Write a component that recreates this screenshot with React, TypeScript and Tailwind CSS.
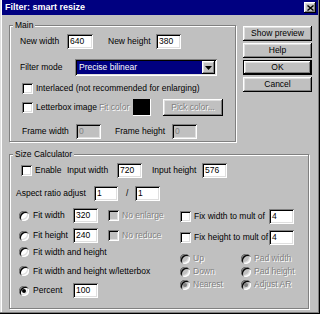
import React from "react";

const sunken =
  "shadow-[inset_1px_1px_0_#808080,inset_-1px_-1px_0_#fff,inset_2px_2px_0_#000,inset_-2px_-2px_0_#dfdfdf]";
const raised =
  "shadow-[inset_-1px_-1px_0_#000,inset_1px_1px_0_#fff,inset_-2px_-2px_0_#808080,inset_2px_2px_0_#dfdfdf]";
const dis = "text-[#808080] [text-shadow:1px_1px_0_#fff]";

function Field({ value, w, disabled }: { value: string; w: string; disabled?: boolean }) {
  return (
    <div
      className={`h-[15px] ${w} ${disabled ? "bg-[#c0c0c0] text-[#808080]" : "bg-white"} ${sunken} flex items-center pl-[3px] shrink-0`}
    >
      {value}
    </div>
  );
}

function Check({ disabled }: { disabled?: boolean }) {
  return <div className={`w-[11px] h-[11px] shrink-0 ${disabled ? "bg-[#c0c0c0]" : "bg-white"} ${sunken}`} />;
}

function Radio({ checked, disabled }: { checked?: boolean; disabled?: boolean }) {
  return (
    <div
      className={`w-[10px] h-[10px] shrink-0 rounded-full ${disabled ? "bg-[#c0c0c0]" : "bg-white"} shadow-[inset_1px_1px_0_#808080,inset_2px_2px_0_#000,inset_-1px_-1px_0_#fff,inset_-2px_-2px_0_#dfdfdf] flex items-center justify-center`}
    >
      {checked && <div className={`w-[4px] h-[4px] rounded-full ${disabled ? "bg-[#808080]" : "bg-black"}`} />}
    </div>
  );
}

function Btn({ label, def }: { label: string; def?: boolean }) {
  return (
    <div className={`h-[15px] w-[69px] ${def ? "border border-black" : ""}`}>
      <div className={`h-full w-full ${raised} flex items-center justify-center`}>{label}</div>
    </div>
  );
}

function Group({ label, className, children }: { label: string; className: string; children: React.ReactNode }) {
  return (
    <div className={`border border-[#808080] shadow-[1px_1px_0_#fff,inset_1px_1px_0_#fff] ${className}`}>
      <div className="-mt-[6px] ml-[3px] px-[2px] bg-[#c0c0c0] w-fit h-[10px] flex items-center">{label}</div>
      {children}
    </div>
  );
}

export default function App() {
  return (
    <div className="w-[320px] h-[314px] bg-[#c0c0c0] font-['Liberation_Sans',Arial,sans-serif] text-[8.5px] text-black leading-none px-[2px] pb-[2px] shadow-[inset_-1px_-1px_0_#000,inset_-2px_-2px_0_#808080,inset_1px_0_0_#dfdfdf,inset_2px_0_0_#fff] flex flex-col overflow-hidden">
      {/* Title bar */}
      <div className="h-[15px] bg-[#000080] flex items-center justify-between pl-[3px] pr-[2px] shrink-0">
        <span className="text-white font-bold text-[9px]">Filter: smart resize</span>
        <div className={`w-[12px] h-[11px] bg-[#c0c0c0] ${raised} flex items-center justify-center`}>
          <svg width="7" height="6" viewBox="0 0 7 6">
            <path d="M0.5 0.5 L6.5 5.5 M6.5 0.5 L0.5 5.5" stroke="#000" strokeWidth="1.4" />
          </svg>
        </div>
      </div>

      {/* Top section */}
      <div className="flex items-start shrink-0">
        <Group label="Main" className="ml-[7px] mt-[10px] w-[227px] pb-[2px]">
          <div className="mt-[4px] h-[15px] flex items-center pl-[10px]">
            <span className="w-[47px]">New width</span>
            <Field value="640" w="w-[26px]" />
            <span className="ml-[15px] w-[48px]">New height</span>
            <Field value="380" w="w-[25px]" />
          </div>
          <div className="mt-[10px] h-[17px] flex items-center pl-[10px]">
            <span className="w-[55px]">Filter mode</span>
            <div className={`w-[142px] h-[17px] bg-white ${sunken} flex items-center p-[2px]`}>
              <div className="flex-1 h-full bg-[#000080] text-white flex items-center pl-[2px]">Precise bilinear</div>
              <div className={`w-[13px] h-full bg-[#c0c0c0] ${raised} flex items-center justify-center`}>
                <svg width="7" height="4" viewBox="0 0 7 4">
                  <path d="M0 0 H7 L3.5 4 Z" fill="#000" />
                </svg>
              </div>
            </div>
          </div>
          <div className="mt-[5px] h-[14px] flex items-center pl-[12px]">
            <Check />
            <span className="ml-[3px]">Interlaced (not recommended for enlarging)</span>
          </div>
          <div className="mt-[4px] h-[17px] flex items-center pl-[12px]">
            <Check />
            <span className="ml-[3px] w-[63px]">Letterbox image</span>
            <span className={`w-[34px] ${dis}`}>Fit color</span>
            <div className={`w-[18px] h-[17px] bg-black shadow-[inset_-1px_-1px_0_#fff]`} />
            <div className={`ml-[12px] w-[60px] h-[17px] ${raised} flex items-center justify-center ${dis}`}>Pick color...</div>
          </div>
          <div className="mt-[8px] h-[15px] flex items-center pl-[12px]">
            <span className="w-[54px]">Frame width</span>
            <Field value="0" w="w-[25px]" disabled />
            <span className="ml-[14px] w-[57px]">Frame height</span>
            <Field value="0" w="w-[25px]" disabled />
          </div>
        </Group>

        <div className="ml-[7px] mt-[11px] w-[69px] flex flex-col gap-[2px]">
          <Btn label="Show preview" />
          <Btn label="Help" />
          <Btn label="OK" def />
          <Btn label="Cancel" />
        </div>
      </div>

      {/* Size calculator */}
      <Group label="Size Calculator" className="ml-[7px] mt-[12px] w-[300px] pb-[10px] shrink-0">
        <div className="mt-[4px] h-[15px] flex items-center pl-[11px]">
          <Check />
          <span className="ml-[3px] w-[32px]">Enable</span>
          <span className="w-[50px]">Input width</span>
          <Field value="720" w="w-[25px]" />
          <span className="ml-[10px] w-[50px]">Input height</span>
          <Field value="576" w="w-[25px]" />
        </div>
        <div className="mt-[8px] h-[15px] flex items-center pl-[6px]">
          <span className="w-[78px]">Aspect ratio adjust</span>
          <Field value="1" w="w-[24px]" />
          <span className="ml-[8px] w-[9px]">/</span>
          <Field value="1" w="w-[25px]" />
        </div>
        <div className="flex">
          <div className="w-[170px] pl-[9px] flex flex-col">
            <div className="mt-[7px] h-[15px] flex items-center">
              <Radio />
              <span className="ml-[4px] w-[40px]">Fit width</span>
              <Field value="320" w="w-[25px]" />
              <div className="ml-[10px]"><Check disabled /></div>
              <span className={`ml-[3px] ${dis}`}>No enlarge</span>
            </div>
            <div className="mt-[5px] h-[15px] flex items-center">
              <Radio />
              <span className="ml-[4px] w-[40px]">Fit height</span>
              <Field value="240" w="w-[25px]" />
              <div className="ml-[10px]"><Check disabled /></div>
              <span className={`ml-[3px] ${dis}`}>No reduce</span>
            </div>
            <div className="mt-[2px] h-[14px] flex items-center">
              <Radio />
              <span className="ml-[4px]">Fit width and height</span>
            </div>
            <div className="mt-[5px] h-[14px] flex items-center">
              <Radio />
              <span className="ml-[4px]">Fit width and height w/letterbox</span>
            </div>
            <div className="mt-[5px] h-[15px] flex items-center">
              <Radio checked />
              <span className="ml-[4px] w-[40px]">Percent</span>
              <Field value="100" w="w-[25px]" />
            </div>
          </div>
          <div className="flex flex-col">
            <div className="mt-[8px] h-[15px] flex items-center">
              <Check />
              <span className="ml-[3px] w-[75px]">Fix width to mult of</span>
              <Field value="4" w="w-[25px]" />
            </div>
            <div className="mt-[6px] h-[15px] flex items-center">
              <Check />
              <span className="ml-[3px] w-[75px]">Fix height to mult of</span>
              <Field value="4" w="w-[25px]" />
            </div>
            <div className="mt-[7px] grid grid-cols-[61px_auto]">
              {[
                ["Up", false, "Pad width", false],
                ["Down", false, "Pad height", false],
                ["Nearest", true, "Adjust AR", true],
              ].map(([a, ac, b, bc]) => (
                <React.Fragment key={a as string}>
                  <div className="h-[13px] flex items-center">
                    <Radio disabled checked={ac as boolean} />
                    <span className={`ml-[3px] ${dis}`}>{a as string}</span>
                  </div>
                  <div className="h-[13px] flex items-center">
                    <Radio disabled checked={bc as boolean} />
                    <span className={`ml-[3px] ${dis}`}>{b as string}</span>
                  </div>
                </React.Fragment>
              ))}
            </div>
          </div>
        </div>
      </Group>
    </div>
  );
}
